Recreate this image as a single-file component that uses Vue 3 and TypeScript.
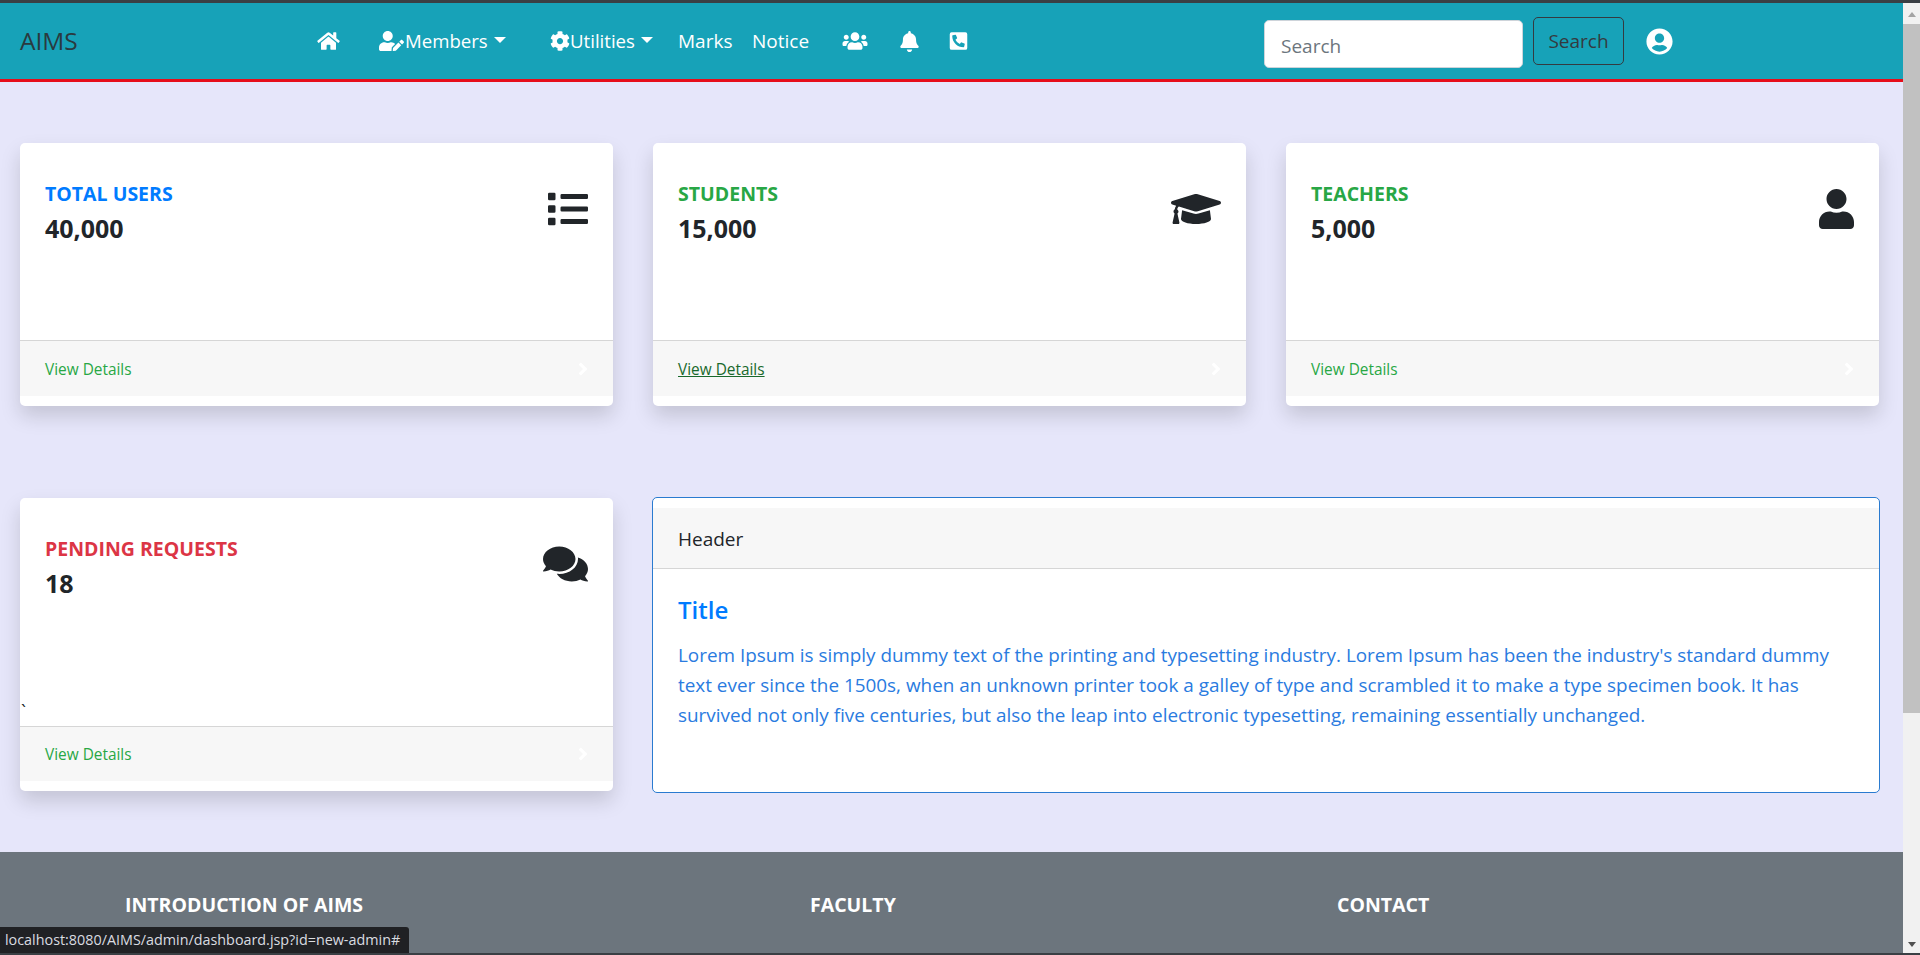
<script setup lang="ts">
const icons = {
  home: { box: '0 0 576 512', d: 'M280.37 148.26L96 300.11V464a16 16 0 0 0 16 16l112.06-.29a16 16 0 0 0 15.92-16V368a16 16 0 0 1 16-16h64a16 16 0 0 1 16 16v95.64a16 16 0 0 0 16 16.05L464 480a16 16 0 0 0 16-16V300L295.67 148.26a12.19 12.19 0 0 0-15.3 0zM571.6 251.47L488 182.56V44.05a12 12 0 0 0-12-12h-56a12 12 0 0 0-12 12v72.61L318.47 43a48 48 0 0 0-61 0L4.34 251.47a12 12 0 0 0-1.6 16.9l25.5 31A12 12 0 0 0 45.15 301l235.22-193.74a12.19 12.19 0 0 1 15.3 0L530.9 301a12 12 0 0 0 16.9-1.6l25.5-31a12 12 0 0 0-1.7-16.93z' },
  userEdit: { box: '0 0 640 512', d: 'M224 256c70.7 0 128-57.3 128-128S294.7 0 224 0 96 57.3 96 128s57.3 128 128 128zm89.6 32h-16.7c-22.2 10.2-46.9 16-72.9 16s-50.6-5.8-72.9-16h-16.7C60.2 288 0 348.2 0 422.4V464c0 26.5 21.5 48 48 48h274.9c-2.4-6.8-3.4-14-2.6-21.3l6.8-60.9 1.2-11.1 7.9-7.9 77.3-77.3c-24.5-27.7-60-45.5-99.9-45.5zm45.3 145.3l-6.8 61c-1.1 10.2 7.5 18.8 17.6 17.6l60.9-6.8 137.9-137.9-71.7-71.7-137.9 137.9zM633 268.9L595.1 231c-9.3-9.3-24.5-9.3-33.8 0l-37.8 37.8-4.1 4.1 71.8 71.7 41.8-41.8c9.3-9.4 9.3-24.5 0-33.9z' },
  cog: { box: '0 0 512 512', d: 'M487.4 315.7l-42.6-24.6c4.3-23.2 4.3-47 0-70.2l42.6-24.6c4.9-2.8 7.1-8.6 5.5-14-11.1-35.6-30-67.8-54.7-94.6-3.8-4.1-10-5.1-14.8-2.3L380.8 110c-17.9-15.4-38.5-27.3-60.8-35.1V25.8c0-5.6-3.9-10.5-9.4-11.7-36.7-8.2-74.3-7.8-109.2 0-5.5 1.2-9.4 6.1-9.4 11.7V75c-22.2 7.9-42.8 19.8-60.8 35.1L88.7 85.5c-4.9-2.8-11-1.9-14.8 2.3-24.7 26.7-43.6 58.9-54.7 94.6-1.7 5.4.6 11.2 5.5 14L67.3 221c-4.3 23.2-4.3 47 0 70.2l-42.6 24.6c-4.9 2.8-7.1 8.6-5.5 14 11.1 35.6 30 67.8 54.7 94.6 3.8 4.1 10 5.1 14.8 2.3l42.6-24.6c17.9 15.4 38.5 27.3 60.8 35.1v49.2c0 5.6 3.9 10.5 9.4 11.7 36.7 8.2 74.3 7.8 109.2 0 5.5-1.2 9.4-6.1 9.4-11.7v-49.2c22.2-7.9 42.8-19.8 60.8-35.1l42.6 24.6c4.9 2.8 11 1.9 14.8-2.3 24.7-26.7 43.6-58.9 54.7-94.6 1.5-5.5-.7-11.3-5.6-14.1zM256 336c-44.1 0-80-35.9-80-80s35.9-80 80-80 80 35.9 80 80-35.9 80-80 80z' },
  users: { box: '0 0 640 512', d: 'M96 224c35.3 0 64-28.7 64-64s-28.7-64-64-64-64 28.7-64 64 28.7 64 64 64zm448 0c35.3 0 64-28.7 64-64s-28.7-64-64-64-64 28.7-64 64 28.7 64 64 64zm32 32h-64c-17.6 0-33.5 7.1-45.1 18.6 40.3 22.1 68.9 62 75.1 109.4h66c17.7 0 32-14.3 32-32v-32c0-35.3-28.7-64-64-64zm-256 0c61.9 0 112-50.1 112-112S381.9 32 320 32 208 82.1 208 144s50.1 112 112 112zm76.8 32h-8.3c-20.8 10-43.9 16-68.5 16s-47.6-6-68.5-16h-8.3C179.6 288 128 339.6 128 403.2V432c0 26.5 21.5 48 48 48h288c26.5 0 48-21.5 48-48v-28.8c0-63.6-51.6-115.2-115.2-115.2zm-223.7-13.4C161.5 263.1 145.6 256 128 256H64c-35.3 0-64 28.7-64 64v32c0 17.7 14.3 32 32 32h65.9c6.3-47.4 34.9-87.3 75.2-109.4z' },
  bell: { box: '0 0 448 512', d: 'M224 512c35.32 0 63.97-28.65 63.97-64H160.03c0 35.35 28.65 64 63.97 64zm215.39-149.71c-19.32-20.76-55.47-51.99-55.47-154.29 0-77.7-54.48-139.9-127.94-155.16V32c0-17.67-14.32-32-31.98-32s-31.98 14.33-31.98 32v20.84C118.56 68.1 64.08 130.3 64.08 208c0 102.3-36.15 133.53-55.47 154.29-6 6.45-8.66 14.16-8.61 21.71.11 16.4 12.98 32 32.1 32h383.8c19.12 0 32-15.6 32.1-32 .05-7.55-2.61-15.27-8.61-21.71z' },
  phone: { box: '0 0 448 512', d: 'M400 32H48A48 48 0 0 0 0 80v352a48 48 0 0 0 48 48h352a48 48 0 0 0 48-48V80a48 48 0 0 0-48-48zm-16.39 307.37l-15 65A15 15 0 0 1 354 416C194 416 64 286.29 64 126a15.7 15.7 0 0 1 11.63-14.61l65-15A18.23 18.23 0 0 1 144 96a16.27 16.27 0 0 1 13.79 9.09l30 70A17.9 17.9 0 0 1 189 181a17 17 0 0 1-5.5 11.61l-37.89 31a231.91 231.91 0 0 0 110.78 110.78l31-37.89A17 17 0 0 1 299 291a17.85 17.85 0 0 1 5.91 1.21l70 30A16.25 16.25 0 0 1 384 336a17.41 17.41 0 0 1-.39 3.37z' },
  userCircle: { box: '0 0 496 512', d: 'M248 8C111 8 0 119 0 256s111 248 248 248 248-111 248-248S385 8 248 8zm0 96c48.6 0 88 39.4 88 88s-39.4 88-88 88-88-39.4-88-88 39.4-88 88-88zm0 344c-58.7 0-111.3-26.6-146.5-68.2 18.8-35.4 55.6-59.8 98.5-59.8 2.4 0 4.8.4 7.1 1.1 13 4.2 26.6 6.9 40.9 6.9 14.3 0 28-2.7 40.9-6.9 2.3-.7 4.7-1.1 7.1-1.1 42.9 0 79.7 24.4 98.5 59.8C359.3 421.4 306.7 448 248 448z' },
  list: { box: '0 0 512 512', d: 'M80 368H16a16 16 0 0 0-16 16v64a16 16 0 0 0 16 16h64a16 16 0 0 0 16-16v-64a16 16 0 0 0-16-16zm0-320H16A16 16 0 0 0 0 64v64a16 16 0 0 0 16 16h64a16 16 0 0 0 16-16V64a16 16 0 0 0-16-16zm0 160H16a16 16 0 0 0-16 16v64a16 16 0 0 0 16 16h64a16 16 0 0 0 16-16v-64a16 16 0 0 0-16-16zm416 176H176a16 16 0 0 0-16 16v32a16 16 0 0 0 16 16h320a16 16 0 0 0 16-16v-32a16 16 0 0 0-16-16zm0-320H176a16 16 0 0 0-16 16v32a16 16 0 0 0 16 16h320a16 16 0 0 0 16-16V80a16 16 0 0 0-16-16zm0 160H176a16 16 0 0 0-16 16v32a16 16 0 0 0 16 16h320a16 16 0 0 0 16-16v-32a16 16 0 0 0-16-16z' },
  cap: { box: '0 0 640 512', d: 'M622.34 153.2L343.4 67.5c-15.2-4.67-31.6-4.67-46.79 0L17.66 153.2c-23.54 7.23-23.54 38.36 0 45.59l48.63 14.94c-10.67 13.19-17.23 29.28-17.88 46.9C38.78 266.15 32 276.11 32 288c0 10.78 5.68 19.85 13.86 25.65L20.33 428.53C18.11 438.52 25.71 448 35.94 448h56.11c10.24 0 17.84-9.48 15.62-19.47L82.14 313.65C90.32 307.85 96 298.78 96 288c0-11.57-6.47-21.25-15.66-26.87.76-15.02 8.44-28.3 20.69-36.72L296.6 284.5c9.06 2.78 26.44 6.25 46.79 0l278.95-85.7c23.55-7.24 23.55-38.36 0-45.6zM352.79 315.09c-28.53 8.76-52.84 3.92-65.59 0l-145.02-44.55L128 384c0 35.35 85.96 64 192 64s192-28.65 192-64l-14.18-113.47-145.03 44.56z' },
  user: { box: '0 0 448 512', d: 'M224 256c70.7 0 128-57.3 128-128S294.7 0 224 0 96 57.3 96 128s57.3 128 128 128zm89.6 32h-16.7c-22.2 10.2-46.9 16-72.9 16s-50.6-5.8-72.9-16h-16.7C60.2 288 0 348.2 0 422.4V464c0 26.5 21.5 48 48 48h352c26.5 0 48-21.5 48-48v-41.6c0-74.2-60.2-134.4-134.4-134.4z' },
  comments: { box: '0 0 576 512', d: 'M416 192c0-88.4-93.1-160-208-160S0 103.6 0 192c0 34.3 14.1 65.9 38 92-13.4 30.2-35.5 54.2-35.8 54.5-2.2 2.3-2.8 5.7-1.5 8.7S4.8 352 8 352c36.6 0 66.9-12.3 88.7-25 32.2 15.7 70.3 25 111.3 25 114.9 0 208-71.6 208-160zm122 220c23.9-26 38-57.7 38-92 0-66.9-53.5-124.2-129.3-148.1.9 6.6 1.3 13.3 1.3 20.1 0 105.9-107.7 192-240 192-10.8 0-21.3-.8-31.7-1.9C207.8 439.6 281.8 480 368 480c41 0 79.1-9.2 111.3-25 21.8 12.7 52.1 25 88.7 25 3.2 0 6.1-1.9 7.3-4.8 1.3-2.9.7-6.3-1.5-8.7-.3-.3-22.4-24.2-35.8-54.5z' },
  angle: { box: '0 0 256 512', d: 'M224.3 273l-136 136c-9.4 9.4-24.6 9.4-33.9 0l-22.6-22.6c-9.4-9.4-9.4-24.6 0-33.9l96.4-96.4-96.4-96.4c-9.4-9.4-9.4-24.6 0-33.9L54.3 103c9.4-9.4 24.6-9.4 33.9 0l136 136c9.5 9.4 9.5 24.6.1 34z' },
}

const topCards = [
  { label: 'Total Users', value: '40,000', tone: 'blue', icon: icons.list, hover: false },
  { label: 'Students', value: '15,000', tone: 'green', icon: icons.cap, hover: true },
  { label: 'Teachers', value: '5,000', tone: 'green', icon: icons.user, hover: false },
]
</script>

<template>
  <div class="window">
    <div class="strip"></div>
    <div class="middle">
      <div class="page">
        <nav class="navbar">
          <a class="brand">AIMS</a>
          <a class="nav-item home"><svg class="fa" :viewBox="icons.home.box"><path :d="icons.home.d" /></svg></a>
          <a class="nav-item members"><svg class="fa" :viewBox="icons.userEdit.box"><path :d="icons.userEdit.d" /></svg>Members<i class="caret"></i></a>
          <a class="nav-item utilities"><svg class="fa" :viewBox="icons.cog.box"><path :d="icons.cog.d" /></svg>Utilities<i class="caret"></i></a>
          <a class="nav-item marks">Marks</a>
          <a class="nav-item notice">Notice</a>
          <a class="nav-item group"><svg class="fa" :viewBox="icons.users.box"><path :d="icons.users.d" /></svg></a>
          <a class="nav-item bell"><svg class="fa" :viewBox="icons.bell.box"><path :d="icons.bell.d" /></svg></a>
          <a class="nav-item phone"><svg class="fa" :viewBox="icons.phone.box"><path :d="icons.phone.d" /></svg></a>
          <input class="search-input" type="text" placeholder="Search" />
          <button class="search-btn" type="button">Search</button>
          <a class="nav-item profile"><svg class="fa-profile" :viewBox="icons.userCircle.box"><path :d="icons.userCircle.d" /></svg></a>
        </nav>

        <main class="content">
          <section class="row-top">
            <article v-for="card in topCards" :key="card.label" class="stat-card">
              <div class="stat-body">
                <div>
                  <div class="stat-label" :class="card.tone">{{ card.label }}</div>
                  <div class="stat-value">{{ card.value }}</div>
                </div>
                <svg class="stat-icon" :viewBox="card.icon.box"><path :d="card.icon.d" /></svg>
              </div>
              <div class="stat-footer">
                <a class="details" :class="{ hovered: card.hover }">View Details</a>
                <svg class="chevron" :viewBox="icons.angle.box"><path :d="icons.angle.d" /></svg>
              </div>
            </article>
          </section>

          <section class="row-bottom">
            <article class="stat-card tall">
              <div class="stat-body">
                <div>
                  <div class="stat-label red">Pending Requests</div>
                  <div class="stat-value">18</div>
                </div>
                <svg class="stat-icon" :viewBox="icons.comments.box"><path :d="icons.comments.d" /></svg>
              </div>
              <div class="stray">`</div>
              <div class="stat-footer">
                <a class="details">View Details</a>
                <svg class="chevron" :viewBox="icons.angle.box"><path :d="icons.angle.d" /></svg>
              </div>
            </article>

            <article class="panel">
              <div class="panel-header">Header</div>
              <div class="panel-body">
                <h5 class="panel-title">Title</h5>
                <p class="panel-text">Lorem Ipsum is simply dummy text of the printing and typesetting industry. Lorem Ipsum has been the industry's standard dummy text ever since the 1500s, when an unknown printer took a galley of type and scrambled it to make a type specimen book. It has survived not only five centuries, but also the leap into electronic typesetting, remaining essentially unchanged.</p>
              </div>
            </article>
          </section>
        </main>

        <footer class="site-footer">
          <h6>Introduction of AIMS</h6>
          <h6>Faculty</h6>
          <h6>Contact</h6>
        </footer>

        <div class="status-url">localhost:8080/AIMS/admin/dashboard.jsp?id=new-admin#</div>
      </div>

      <div class="scrollbar">
        <i class="arrow up"></i>
        <div class="thumb"></div>
        <i class="arrow down"></i>
      </div>
    </div>
    <div class="strip bottom"></div>
  </div>
</template>

<style>
html,
body {
  margin: 0;
  overflow: hidden;
}
</style>

<style scoped>
.window {
  width: 1920px;
  height: 955px;
  display: flex;
  flex-direction: column;
  overflow: hidden;
  font-family: "Open Sans", "Noto Sans", sans-serif;
  font-size: 19px;
  line-height: 30px;
  color: #212529;
  background: #e6e6fa;
}

.strip {
  height: 3px;
  flex: none;
  background: #3a3f44;
}

.strip.bottom {
  height: 2px;
}

.middle {
  flex: 1;
  min-height: 0;
  display: flex;
}

.page {
  position: relative;
  flex: 1;
  min-width: 0;
  overflow: hidden;
  display: flex;
  flex-direction: column;
}

.navbar {
  height: 76px;
  flex: none;
  display: flex;
  align-items: center;
  box-sizing: content-box;
  background: #17a2b8;
  border-bottom: 3px solid #e60d1a;
}

.brand {
  margin-left: 20px;
  width: 297px;
  font-size: 24.5px;
  color: #2a3a3f;
}

.nav-item {
  display: flex;
  align-items: center;
  color: #fff;
  white-space: nowrap;
}

.fa {
  height: 20px;
  fill: #fff;
  flex: none;
}

.home .fa {
  width: 23px;
}

.members {
  width: 134px;
  margin-left: 39px;
  font-size: 18.6px;
}

.members .fa {
  width: 25px;
  margin-right: 1px;
}

.utilities {
  width: 102px;
  margin-left: 37px;
  font-size: 18.6px;
}

.utilities .fa {
  width: 20px;
}

.caret {
  display: block;
  margin-left: 6px;
  margin-top: -3px;
  border-top: 6px solid #fff;
  border-left: 6px solid transparent;
  border-right: 6px solid transparent;
}

.marks {
  margin-left: 26px;
  width: 54px;
}

.notice {
  margin-left: 20px;
  width: 58px;
}

.group {
  margin-left: 32px;
}

.group .fa {
  width: 26px;
}

.bell {
  margin-left: 32px;
}

.bell .fa {
  width: 19px;
  height: 21px;
}

.phone {
  margin-left: 30px;
}

.phone .fa {
  width: 19px;
}

.search-input {
  margin-left: 296px;
  margin-top: 6px;
  width: 259px;
  height: 48px;
  box-sizing: border-box;
  padding: 3px 16px 0;
  border: 1px solid #ced4da;
  border-radius: 5px;
  background: #fff;
  font: inherit;
  color: #495057;
}

.search-input::placeholder {
  color: #6c757d;
}

.search-btn {
  margin-left: 10px;
  width: 91px;
  height: 48px;
  padding: 0;
  border: 1px solid #343a40;
  border-radius: 5px;
  background: transparent;
  font: inherit;
  color: #343a40;
}

.profile {
  margin-left: 22px;
}

.fa-profile {
  width: 27px;
  height: 27px;
  fill: #fff;
}

.content {
  flex: none;
  padding: 61px 24px 59px 20px;
}

.row-top {
  display: grid;
  grid-template-columns: repeat(3, 593px);
  gap: 40px;
  margin-bottom: 92px;
}

.row-bottom {
  display: grid;
  grid-template-columns: 593px 1226px;
  gap: 40px;
  align-items: start;
}

.stat-card {
  height: 263px;
  display: flex;
  flex-direction: column;
  background: #fff;
  border-radius: 5px;
  box-shadow: 0 10px 20px rgba(0, 0, 0, 0.15);
  padding-bottom: 10px;
  box-sizing: border-box;
}

.stat-card.tall {
  height: 293px;
}

.stat-body {
  flex: 1;
  display: flex;
  justify-content: space-between;
  align-items: flex-start;
  padding: 36px 25px 0;
}

.stat-label {
  font-size: 19.5px;
  font-weight: 700;
  text-transform: uppercase;
}

.blue {
  color: #007bff;
}

.green {
  color: #28a745;
}

.red {
  color: #dc3545;
}

.stat-value {
  margin-top: 4px;
  font-size: 25px;
  font-weight: 700;
}

.stat-icon {
  height: 40px;
  margin-top: 10px;
  fill: #212529;
}

.stray {
  height: 24px;
  padding-left: 1px;
  font-size: 18px;
  line-height: 18px;
}

.stat-footer {
  height: 56px;
  flex: none;
  box-sizing: border-box;
  display: flex;
  justify-content: space-between;
  align-items: center;
  padding: 0 25px;
  background: #f7f7f7;
  border-top: 1px solid #d6d6d6;
}

.tall .stat-footer {
  height: 55px;
}

.details {
  padding-top: 2px;
  font-size: 15.4px;
  color: #28a745;
}

.details.hovered {
  color: #19692c;
  text-decoration: underline;
}

.chevron {
  width: 10px;
  height: 20px;
  fill: #fff;
}

.panel {
  height: 296px;
  margin: -1px -1px 0;
  box-sizing: border-box;
  padding-top: 10px;
  background: #fff;
  border: 1px solid #2a7bd0;
  border-radius: 5px;
}

.panel-header {
  height: 61px;
  box-sizing: border-box;
  padding: 2px 25px 0;
  display: flex;
  align-items: center;
  background: #f7f7f7;
  border-bottom: 1px solid #d6d6d6;
}

.panel-body {
  padding: 26px 25px 0;
}

.panel-title {
  margin: 0 0 15px;
  font-size: 24px;
  font-weight: 600;
  color: #007bff;
}

.panel-text {
  margin: 0;
  font-size: 18.9px;
  color: #2a7be0;
}

.site-footer {
  flex: 1;
  display: grid;
  grid-template-columns: 685px 527px 1fr;
  padding: 38px 0 0 125px;
  background: #6c757d;
}

.site-footer h6 {
  margin: 0;
  font-size: 19.5px;
  font-weight: 700;
  text-transform: uppercase;
  color: #fff;
}

.status-url {
  position: absolute;
  left: 0;
  bottom: 0;
  height: 26px;
  width: 409px;
  box-sizing: border-box;
  padding-left: 5px;
  background: #202124;
  border-top-right-radius: 3px;
  font-size: 14.35px;
  line-height: 26px;
  color: #dadce0;
}

.scrollbar {
  width: 17px;
  flex: none;
  display: flex;
  flex-direction: column;
  align-items: center;
  background: #f1f1f1;
}

.thumb {
  width: 17px;
  height: 689px;
  background: #c1c1c1;
}

.arrow {
  display: block;
  border-left: 4px solid transparent;
  border-right: 4px solid transparent;
}

.arrow.up {
  margin: 9px 0 7px;
  border-bottom: 5px solid #a3a3a3;
}

.arrow.down {
  margin-top: auto;
  margin-bottom: 6px;
  border-top: 5px solid #505050;
}
</style>
